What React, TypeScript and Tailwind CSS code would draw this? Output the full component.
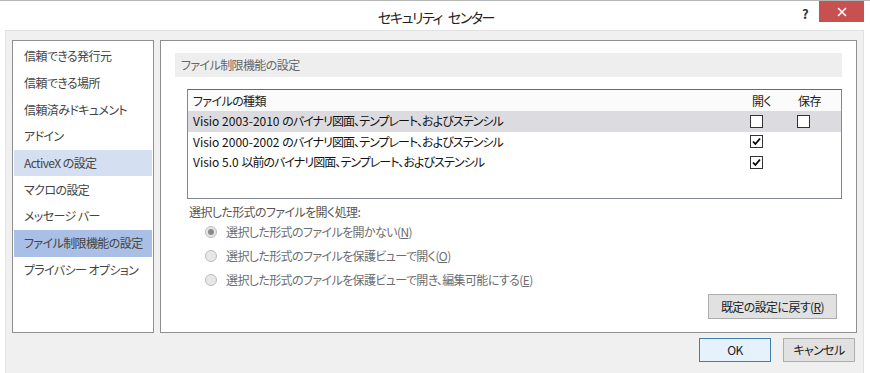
import React from 'react';

const font = "[font-family:'Noto_Sans_CJK_JP','Noto_Sans',sans-serif] [font-feature-settings:'palt']";

const navItems = [
  '信頼できる発行元',
  '信頼できる場所',
  '信頼済みドキュメント',
  'アドイン',
  'ActiveX の設定',
  'マクロの設定',
  'メッセージ バー',
  'ファイル制限機能の設定',
  'プライバシー オプション',
];

const fileTypes = [
  { prefix: 'Visio 2003-2010 ', rest: 'のバイナリ図面、テンプレート、およびステンシル', open: false, save: false as boolean | null },
  { prefix: 'Visio 2000-2002 ', rest: 'のバイナリ図面、テンプレート、およびステンシル', open: true, save: null },
  { prefix: 'Visio 5.0 ', rest: '以前のバイナリ図面、テンプレート、およびステンシル', open: true, save: null },
];

const Check = ({ checked }: { checked: boolean }) => (
  <div className="w-[13px] h-[13px] border border-[#333333] bg-white flex items-center justify-center">
    {checked && (
      <svg width="9" height="9" viewBox="0 0 9 9">
        <path d="M1 4.5 L3.4 7 L8 1.5" fill="none" stroke="#000" strokeWidth="1.8" />
      </svg>
    )}
  </div>
);

const Radio = ({ checked }: { checked: boolean }) => (
  <div className="w-[12px] h-[12px] rounded-full border border-[#bcbcbc] bg-[#e6e6e6] flex items-center justify-center">
    {checked && <div className="w-[6px] h-[6px] rounded-full bg-[#8a8a8a]" />}
  </div>
);

const Underline = ({ text, key_ }: { text: string; key_: string }) => (
  <span>
    {text}(<span className="underline">{key_}</span>)
  </span>
);

const App: React.FC = () => {
  const radios = [
    { text: '選択した形式のファイルを開かない', k: 'N', checked: true },
    { text: '選択した形式のファイルを保護ビューで開く', k: 'O', checked: false },
    { text: '選択した形式のファイルを保護ビューで開き、編集可能にする', k: 'E', checked: false },
  ];

  return (
    <div className={`w-[870px] h-[373px] bg-white border-t border-[#b5b5b5] flex flex-col overflow-hidden text-[12px] tracking-[-0.6px] ${font}`}>
      {/* title bar */}
      <div className="h-[29px] shrink-0 flex items-start relative">
        <div className="flex-1 flex justify-center gap-[6px] pt-[6px] pl-[2px] text-[14px] text-[#222] tracking-[-1.4px]">
          <span>セキュリティ</span>
          <span>センター</span>
        </div>
        <div className="absolute right-[6px] top-0 flex items-start">
          <span className="text-[13px] text-[#333] mt-[3px] mr-[11px] font-bold">?</span>
          <div className="w-[45px] h-[21px] bg-[#c75050] flex items-center justify-center">
            <svg width="10" height="10" viewBox="0 0 10 10">
              <path d="M1 1 L9 9 M9 1 L1 9" stroke="#fff" strokeWidth="1.6" />
            </svg>
          </div>
        </div>
      </div>

      {/* body */}
      <div className="h-[360px] shrink-0 ml-[5px] mr-[6px] bg-[#f0f0f0] border border-[#e2e2e2] flex flex-col pl-[6px] pt-[9px]">
        <div className="flex gap-[6px]">
          {/* nav */}
          <div className="w-[142px] h-[293px] bg-white border border-[#8e8f8f] px-[1px] pt-[2px] text-[#444]">
            {navItems.map((item, i) => (
              <div
                key={item}
                className={`h-[26.7px] flex items-center pl-[10px] ${
                  i === 7 ? 'bg-[#a9bfe5]' : i === 4 ? 'bg-[#d5dff2]' : ''
                }`}
              >
                {item}
              </div>
            ))}
          </div>

          {/* main */}
          <div className="w-[697px] h-[293px] bg-white border border-[#8e8f8f] pl-[14px] pt-[12px]">
            <div className="w-[667px] h-[24px] bg-[#eeeeee] flex items-center pl-[6px] text-[#666]">
              ファイル制限機能の設定
            </div>

            <div className="ml-[12px] mt-[12px] w-[655px] h-[110px] border border-[#828790] border-t-[#6b6b6b]">
              <div className="h-[21px] flex items-center bg-[#fbfbfb] text-[#222]">
                <div className="flex-1 pl-[5px]">ファイルの種類</div>
                <div className="w-[47px] pl-[2px]">開く</div>
                <div className="w-[44px] pl-[1px]">保存</div>
              </div>
              {fileTypes.map((f, i) => (
                <div key={f.prefix} className={`h-[20.5px] flex items-center text-[#111] ${i === 0 ? 'bg-[#dcdce0]' : ''}`}>
                  <div className="flex-1 pl-[5px] whitespace-pre">
                    <span className="tracking-[0px]">{f.prefix}</span>
                    <span className="tracking-[-0.95px]">{f.rest}</span>
                  </div>
                  <div className="w-[47px]">
                    <Check checked={f.open} />
                  </div>
                  <div className="w-[44px]">{f.save !== null && <Check checked={f.save} />}</div>
                </div>
              ))}
            </div>

            <div className="ml-[14px] mt-[4px] text-[#555]">選択した形式のファイルを開く処理:</div>
            <div className="ml-[30px] mt-[1px] flex flex-col gap-[5px] text-[#6d6d6d]">
              {radios.map((r) => (
                <div key={r.k} className="h-[19px] flex items-center gap-[9px]">
                  <Radio checked={r.checked} />
                  <Underline text={r.text} key_={r.k} />
                </div>
              ))}
            </div>

            <div className="flex justify-end pr-[19px] mt-[5px]">
              <div className="w-[129px] h-[25px] bg-[#e1e1e1] border border-[#adadad] flex items-center justify-center text-[#222]">
                <Underline text="既定の設定に戻す" key_="R" />
              </div>
            </div>
          </div>
        </div>

        {/* footer buttons */}
        <div className="flex justify-end gap-[12px] pr-[8px] mt-[5px]">
          <div className="w-[72px] h-[24px] bg-[#e5f1fb] border border-[#3c7fb1] flex items-center justify-center text-[#222]">
            OK
          </div>
          <div className="w-[72px] h-[24px] bg-[#e1e1e1] border border-[#adadad] flex items-center justify-center text-[#222]">
            キャンセル
          </div>
        </div>
      </div>
    </div>
  );
};

export default App;
